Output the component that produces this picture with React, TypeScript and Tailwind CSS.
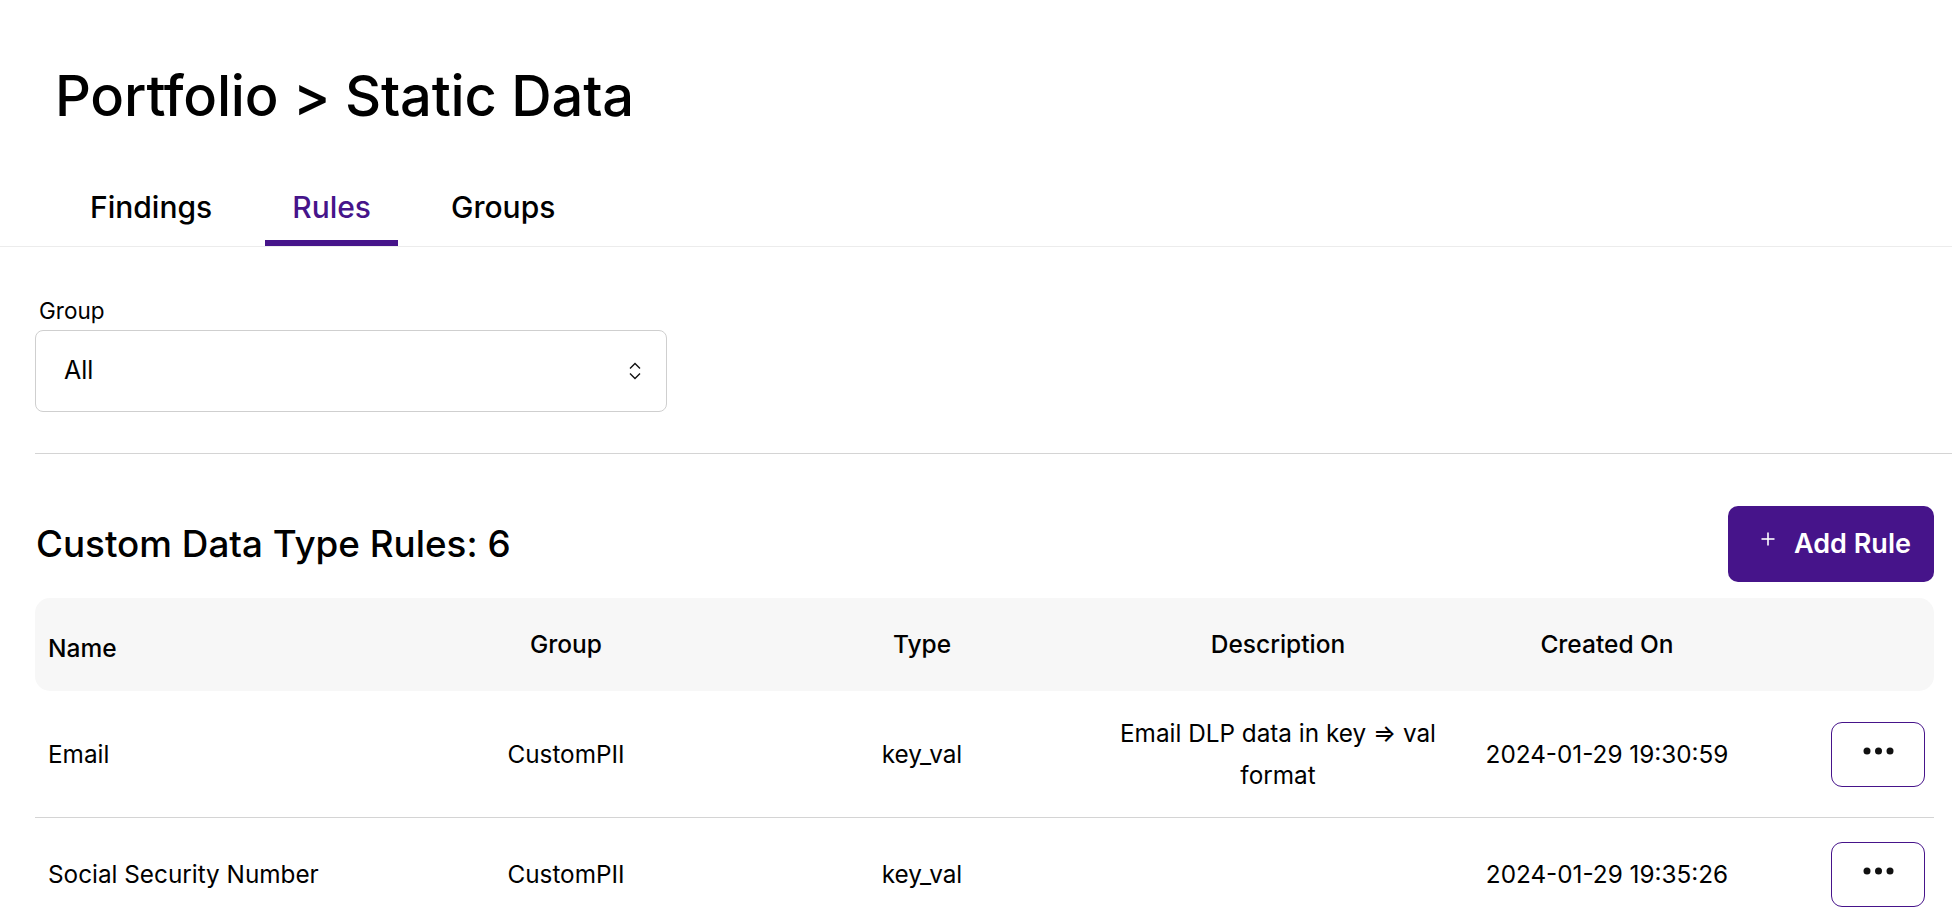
import React from "react";

type Rule = {
  name: string;
  group: string;
  type: string;
  description: string;
  created: string;
};

const rules: Rule[] = [
  {
    name: "Email",
    group: "CustomPII",
    type: "key_val",
    description: "Email DLP data in key ⇒ val format",
    created: "2024-01-29 19:30:59",
  },
  {
    name: "Social Security Number",
    group: "CustomPII",
    type: "key_val",
    description: "",
    created: "2024-01-29 19:35:26",
  },
];

function UpDownIcon() {
  return (
    <svg width="14" height="20" viewBox="0 0 14 20" fill="none" stroke="#111" strokeWidth="1.4">
      <path d="M2 7.5 L7 2.5 L12 7.5" />
      <path d="M2 12.5 L7 17.5 L12 12.5" />
    </svg>
  );
}

function DotsIcon() {
  return (
    <svg width="31" height="8" viewBox="0 0 31 8" fill="#111">
      <circle cx="4" cy="4" r="3.5" />
      <circle cx="15.5" cy="4" r="3.5" />
      <circle cx="27" cy="4" r="3.5" />
    </svg>
  );
}

function PlusIcon() {
  return (
    <svg width="14" height="14" viewBox="0 0 14 14" fill="none" stroke="#fff" strokeWidth="1.6">
      <path d="M7 0.5 V13.5" />
      <path d="M0.5 7 H13.5" />
    </svg>
  );
}

const cols = "grid grid-cols-[353px_356px_356px_356px_302px_1fr]";

export default function App() {
  return (
    <div className="min-h-screen bg-white text-black font-['Inter',sans-serif]">
      <div className="pl-[55px] pt-[62px] pb-[53px]">
        <h1 className="text-[56px] leading-[68px] font-medium tracking-[-0.2px]">Portfolio &gt; Static Data</h1>
      </div>

      <div className="flex border-b border-[#ececec] pl-[63px] gap-[26px]">
        {["Findings", "Rules", "Groups"].map((t) => (
          <div
            key={t}
            className={
              t === "Rules"
                ? "px-[27px] pt-[6px] pb-[15px] text-[30px] leading-[36px] font-medium text-[#46148a] border-b-[6px] border-[#46148a]"
                : "px-[27px] pt-[6px] pb-[15px] text-[30px] leading-[36px] font-medium border-b-[6px] border-transparent"
            }
          >
            {t}
          </div>
        ))}
      </div>

      <div className="pl-[35px] pr-[18px]">
        <div className="pt-[50px] pl-[4px] text-[22.5px] leading-[28px]">Group</div>
        <div className="mt-[5px] w-[632px] h-[82px] rounded-[8px] border border-[#cfcfcf] flex items-center justify-between pl-[28px] pr-[24px]">
          <span className="text-[25px]">All</span>
          <UpDownIcon />
        </div>

        <div className="mt-[41px] border-t border-[#d4d4d4] -mr-[18px]" />

        <div className="mt-[52px] flex items-center justify-between">
          <h2 className="text-[36.8px] font-medium pl-[1px]">Custom Data Type Rules: 6</h2>
          <button className="h-[76px] w-[206px] rounded-[10px] bg-[#46148a] text-white flex items-center pl-[33px] gap-[19px] text-[27px] font-semibold">
            <span className="-mt-[10px]">
              <PlusIcon />
            </span>
            <span>Add Rule</span>
          </button>
        </div>

        <div className="mt-[16px]">
          <div className={`${cols} h-[93px] items-center bg-[#f7f7f7] rounded-[15px] text-[24.5px] font-medium`}>
            <div className="pl-[13px] pt-[8px]">Name</div>
            <div className="text-center">Group</div>
            <div className="text-center">Type</div>
            <div className="text-center">Description</div>
            <div className="text-center">Created On</div>
            <div />
          </div>
          {rules.map((r, i) => (
            <div
              key={r.name}
              className={
                i === 0
                  ? `${cols} min-h-[127px] items-center border-b border-[#d4d4d4] text-[24.3px]`
                  : `${cols} min-h-[112px] items-center text-[24.3px]`
              }
            >
              <div className="pl-[13px]">{r.name}</div>
              <div className="text-center">{r.group}</div>
              <div className="text-center">{r.type}</div>
              <div className="text-center px-[6px] leading-[42px]">{r.description}</div>
              <div className="text-center">{r.created}</div>
              <div className="flex justify-end pr-[9px]">
                <button className="w-[94px] h-[65px] rounded-[11px] border border-[#46148a] flex items-center justify-center pb-[7px]">
                  <DotsIcon />
                </button>
              </div>
            </div>
          ))}
        </div>
      </div>
    </div>
  );
}
